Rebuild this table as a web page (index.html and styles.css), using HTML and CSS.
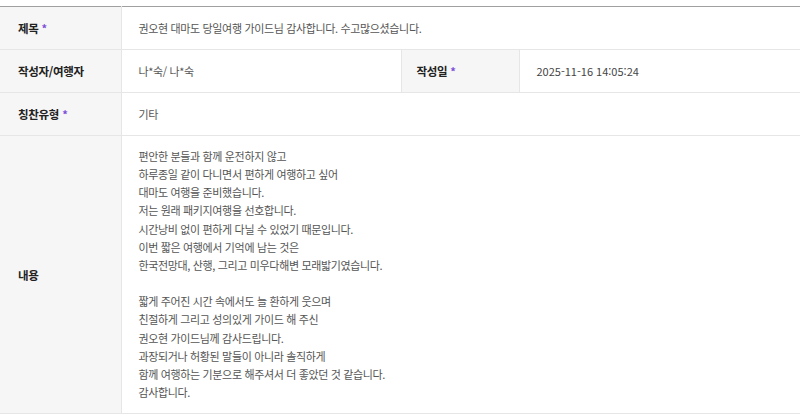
FILE: index.html
```html
<!DOCTYPE html>
<html lang="ko">
<head>
<meta charset="utf-8">
<link rel="stylesheet" href="styles.css">
</head>
<body>
<div class="wrap">
  <table class="form">
    <colgroup>
      <col class="c1"><col class="c2"><col class="c3"><col class="c4">
    </colgroup>
    <tr class="row">
      <th>제목<span class="req">*</span></th>
      <td colspan="3">권오현 대마도 당일여행 가이드님 감사합니다. 수고많으셨습니다.</td>
    </tr>
    <tr class="row">
      <th>작성자/여행자</th>
      <td>나*숙/ 나*숙</td>
      <th class="th2">작성일<span class="req">*</span></th>
      <td class="td2">2025-11-16 14:05:24</td>
    </tr>
    <tr class="row">
      <th>칭찬유형<span class="req">*</span></th>
      <td colspan="3">기타</td>
    </tr>
    <tr>
      <th>내용</th>
      <td colspan="3" class="content">
        <p>편안한 분들과 함께 운전하지 않고<br>하루종일 같이 다니면서 편하게 여행하고 싶어<br>대마도 여행을 준비했습니다.<br>저는 원래 패키지여행을 선호합니다.<br>시간낭비 없이 편하게 다닐 수 있었기 때문입니다.<br>이번 짧은 여행에서 기억에 남는 것은<br>한국전망대, 산행, 그리고 미우다해변 모래밟기였습니다.<br><br>짧게 주어진 시간 속에서도 늘 환하게 웃으며<br>친절하게 그리고 성의있게 가이드 해 주신<br>권오현 가이드님께 감사드립니다.<br>과장되거나 허황된 말들이 아니라 솔직하게<br>함께 여행하는 기분으로 해주셔서 더 좋았던 것 같습니다.<br>감사합니다.</p>
      </td>
    </tr>
  </table>
</div>
</body>
</html>
```
FILE: styles.css
```css
html, body {
  margin: 0;
  padding: 0;
  background: #fff;
}
body {
  font-family: "Noto Sans CJK KR", "Noto Sans", sans-serif;
  color: #555;
}
.wrap {
  padding-top: 6px;
}
.form {
  width: 800px;
  border-collapse: collapse;
  table-layout: fixed;
  border-top: 1px solid #a0a0a0;
}
.c1 { width: 121px; }
.c2 { width: 280px; }
.c3 { width: 118px; }
.c4 { width: auto; }
.form th, .form td {
  border-bottom: 1px solid #e6e6e6;
  text-align: left;
  vertical-align: middle;
}
.form th {
  background: #f6f6f6;
  color: #222;
  font-weight: 700;
  font-size: 11.5px;
  padding: 0 0 0 18px;
  border-right: 1px solid #e6e6e6;
  letter-spacing: -0.3px;
}
.form td {
  font-size: 11px;
  padding: 0 0 0 17px;
  letter-spacing: -0.35px;
}
.row th, .row td {
  height: 42px;
}
.form .th2 {
  padding-left: 15px;
  border-left: 1px solid #e6e6e6;
}
.form .td2 {
  padding-left: 17px;
  letter-spacing: 0;
  color: #444;
}
.req {
  color: #7b4fd8;
  font-weight: 700;
  font-size: 11px;
  margin-left: 3px;
  letter-spacing: 0;
}
.form .content {
  padding-top: 11px;
  padding-bottom: 12px;
}
.content p {
  margin: 0;
  line-height: 18.15px;
}
```
